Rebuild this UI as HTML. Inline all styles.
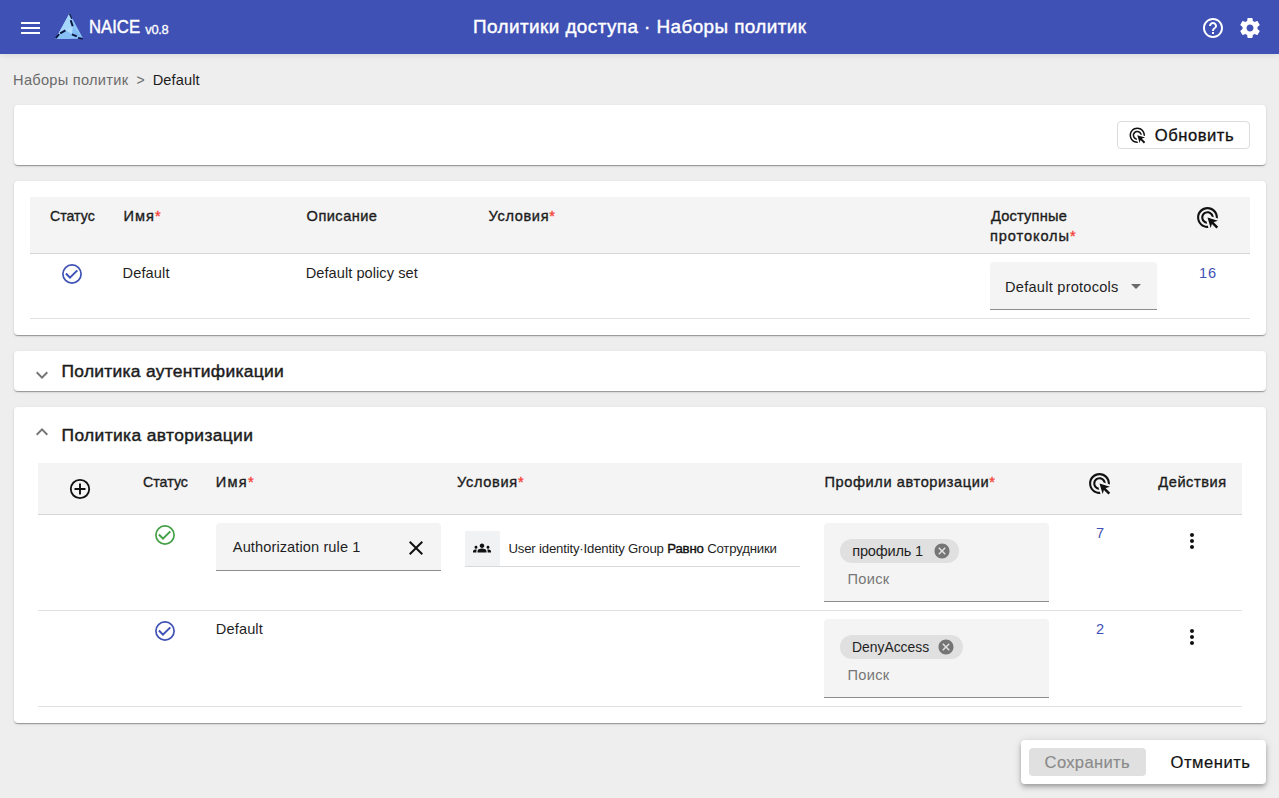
<!DOCTYPE html>
<html><head><meta charset="utf-8">
<style>
*{box-sizing:border-box;margin:0;padding:0}
html,body{width:1279px;height:798px;overflow:hidden}
body{background:#eeeeee;font-family:"Liberation Sans",sans-serif;color:#222;position:relative;font-size:14px}
.a{position:absolute;white-space:nowrap}
svg{display:block}
.hdr{left:0;top:0;width:1279px;height:54px;background:#3f51b5;box-shadow:0 1px 6px rgba(0,0,0,.1)}
.card{background:#fff;border-radius:4px;box-shadow:0 2px 1px -1px rgba(0,0,0,.2),0 1px 1px 0 rgba(0,0,0,.14),0 1px 3px 0 rgba(0,0,0,.12)}
.th{background:#f4f4f4;border-bottom:1px solid #d6d6d6}
.hl{height:1px;background:#e0e0e0}
.req{color:#f44336;-webkit-text-stroke:0.35px #f44336}
.fld{background:#f4f4f4;border-radius:4px 4px 0 0;border-bottom:1px solid #8c8c8c}
.chip{background:#e0e0e0;border-radius:12px;height:24px}
</style></head>
<body>
<!-- header -->
<div class="a hdr"></div>
<div class="a" style="left:21px;top:22px;width:19px;height:2px;background:#fff"></div><div class="a" style="left:21px;top:27px;width:19px;height:2px;background:#fff"></div><div class="a" style="left:21px;top:32px;width:19px;height:2px;background:#fff"></div>
<svg class="a" style="left:55px;top:13px" width="29" height="27" viewBox="0 0 29 27">
  <polygon points="14.5,0.3 28.2,25.8 0.5,26" fill="#8ec6f8"/>
  <polygon points="14.5,0.3 17.8,13.5 10.4,17.2 0.5,26" fill="#a6d6fc"/>
  <polygon points="17.8,13.5 28.2,25.8 16.9,21.3" fill="#7fbaf3"/>
  <polygon points="10.4,17.2 17.8,13.5 16.9,21.3" fill="#b0dcfd"/>
  <polygon points="0.5,26 10.4,17.2 16.9,21.3 14,26" fill="#86c0f5"/>
  <path d="M14.5 0.8 L16.8 5.8" stroke="#0b1640" stroke-width="1.3"/>
  <path d="M15.7 7.3 L17.7 13.2" stroke="#0b1640" stroke-width="2"/>
  <path d="M0.8 25.2 L4.2 21.2" stroke="#0b1640" stroke-width="1.8"/>
  <path d="M5.2 20.3 L10.4 17.3" stroke="#0b1640" stroke-width="2"/>
  <path d="M16.9 21.4 L21.8 23.4" stroke="#0b1640" stroke-width="2"/>
  <path d="M23 24.9 L27.9 25.7" stroke="#0b1640" stroke-width="1.6"/>
</svg>
<svg class="a" style="left:1200.7px;top:15.8px" width="24" height="24" viewBox="0 0 24 24"><path fill="#fff" d="M11 18h2v-2h-2v2zm1-16C6.48 2 2 6.48 2 12s4.48 10 10 10 10-4.48 10-10S17.52 2 12 2zm0 18c-4.41 0-8-3.590-8-8s3.59-8 8-8 8 3.59 8 8-3.59 8-8 8zm0-14c-2.21 0-4 1.79-4 4h2c0-1.1.9-2 2-2s2 .9 2 2c0 2-3 1.75-3 5h2c0-2.25 3-2.5 3-5 0-2.21-1.79-4-4-4z"/></svg>
<svg class="a" style="left:1237.7px;top:15.8px" width="24" height="24" viewBox="0 0 24 24"><path fill="#fff" d="M19.43 12.98c.04-.32.07-.64.07-.98s-.03-.66-.07-.98l2.11-1.65c.19-.15.24-.42.12-.64l-2-3.46c-.12-.22-.39-.3-.61-.22l-2.49 1c-.52-.4-1.08-.73-1.690-.98l-.38-2.65C14.46 2.18 14.25 2 14 2h-4c-.25 0-.46.18-.49.42l-.38 2.65c-.61.25-1.17.59-1.69.98l-2.49-1c-.23-.09-.49 0-.61.22l-2 3.46c-.13.22-.07.49.12.64l2.11 1.65c-.04.32-.07.65-.07.98s.03.66.07.98l-2.11 1.65c-.19.15-.24.42-.12.64l2 3.46c.12.22.39.3.61.22l2.49-1c.52.4 1.08.73 1.69.98l.38 2.65c.03.24.24.42.49.42h4c.25 0 .46-.18.49-.42l.38-2.65c.61-.25 1.17-.59 1.69-.98l2.49 1c.23.09.49 0 .61-.22l2-3.46c.12-.22.07-.49-.12-.64l-2.11-1.65zM12 15.5c-1.93 0-3.5-1.57-3.5-3.5s1.57-3.5 3.5-3.5 3.5 1.57 3.5 3.5-1.57 3.5-3.5 3.5z"/></svg>

<!-- card 1 -->
<div class="a card" style="left:14px;top:105px;width:1252px;height:60px"></div>
<div class="a" style="left:1117px;top:121px;width:133px;height:28px;border:1px solid #dcdcdc;border-radius:4px"></div>
<svg class="a" style="left:1128.2px;top:125.8px" width="18.6" height="18.6" viewBox="0 0 24 24"><path fill="#111" d="M11.71 17.99C8.53 17.84 6 15.22 6 12c0-3.31 2.69-6 6-6 3.22 0 5.84 2.53 5.99 5.71l-2.1-.63C15.48 9.31 13.89 8 12 8c-2.21 0-4 1.79-4 4 0 1.89 1.31 3.48 3.08 3.890l.63 2.1zM22 12c0 .3-.01.6-.04.9l-1.97-.59c.01-.1.01-.21.01-.31 0-4.42-3.58-8-8-8s-8 3.58-8 8 3.58 8 8 8c.1 0 .21 0 .31-.01l.59 1.97c-.3.03-.6.04-.9.04-5.52 0-10-4.48-10-10S6.48 2 12 2s10 4.48 10 10zm-3.77 4.26L22 15l-10-3 3 10 1.26-3.770 4.27 4.27 1.73-1.73-4.26-4.27z"/></svg>

<!-- card 2 -->
<div class="a card" style="left:14px;top:181px;width:1252px;height:154px"></div>
<div class="a th" style="left:30px;top:197px;width:1220px;height:57px"></div>
<div class="a hl" style="left:30px;top:318px;width:1220px"></div>
<svg class="a" style="left:60.1px;top:262px" width="24" height="24" viewBox="0 0 24 24"><circle cx="12" cy="12" r="9.1" fill="none" stroke="#3f51b5" stroke-width="1.7"/><path d="M5.9 11.5 L10 15.7 L17.3 8.4" fill="none" stroke="#3f51b5" stroke-width="2"/></svg>
<div class="a fld" style="left:990px;top:262px;width:167px;height:48px"></div>
<svg class="a" style="left:1124px;top:273.5px" width="24" height="24" viewBox="0 0 24 24"><path fill="#6b6b6b" d="M7 10l5 5 5-5z"/></svg>
<svg class="a ac" style="left:1195.1px;top:204.7px" width="25" height="25" viewBox="0 0 24 24"><path fill="#111" d="M11.71 17.99C8.53 17.84 6 15.22 6 12c0-3.31 2.69-6 6-6 3.22 0 5.84 2.53 5.99 5.71l-2.1-.63C15.48 9.31 13.89 8 12 8c-2.21 0-4 1.79-4 4 0 1.89 1.31 3.48 3.08 3.89l.63 2.1zM22 12c0 .3-.01.6-.04.9l-1.97-.59c.01-.1.01-.21.01-.31 0-4.42-3.58-8-8-8s-8 3.58-8 8 3.58 8 8 8c.1 0 .21 0 .31-.01l.59 1.97c-.3.03-.6.04-.9.04-5.52 0-10-4.48-10-10S6.48 2 12 2s10 4.48 10 10zm-3.77 4.26L22 15l-10-3 3 10 1.26-3.77 4.27 4.27 1.73-1.73-4.26-4.27z"/></svg>

<!-- card 3 -->
<div class="a card" style="left:14px;top:351px;width:1252px;height:40px"></div>
<svg class="a" style="left:30px;top:362.5px" width="24" height="24" viewBox="0 0 24 24"><path fill="#757575" d="M16.59 8.59L12 13.17 7.41 8.59 6 10l6 6 6-6z"/></svg>

<!-- card 4 -->
<div class="a card" style="left:14px;top:407px;width:1252px;height:316px"></div>
<svg class="a" style="left:30px;top:420px" width="24" height="24" viewBox="0 0 24 24"><path fill="#757575" d="M12 8l-6 6 1.41 1.41L12 10.83l4.59 4.58L18 14z"/></svg>
<div class="a th" style="left:38px;top:463px;width:1204px;height:52px"></div>
<svg class="a" style="left:68.1px;top:476.9px" width="24" height="24" viewBox="0 0 24 24"><circle cx="12" cy="12" r="9.2" fill="none" stroke="#111" stroke-width="1.8"/><path d="M6.5 12H17.5M12 6.6V17.4" stroke="#111" stroke-width="1.9"/></svg>
<svg class="a ac" style="left:1087.1px;top:470.7px" width="25" height="25" viewBox="0 0 24 24"><path fill="#111" d="M11.71 17.99C8.53 17.84 6 15.22 6 12c0-3.31 2.69-6 6-6 3.22 0 5.84 2.53 5.99 5.71l-2.1-.63C15.48 9.31 13.89 8 12 8c-2.21 0-4 1.79-4 4 0 1.89 1.31 3.48 3.08 3.89l.63 2.1zM22 12c0 .3-.01.6-.04.9l-1.97-.59c.01-.1.01-.21.01-.31 0-4.42-3.58-8-8-8s-8 3.58-8 8 3.58 8 8 8c.1 0 .21 0 .31-.01l.59 1.97c-.3.03-.6.04-.9.04-5.52 0-10-4.48-10-10S6.48 2 12 2s10 4.48 10 10zm-3.77 4.26L22 15l-10-3 3 10 1.26-3.77 4.27 4.27 1.73-1.73-4.26-4.27z"/></svg>

<!-- row 1 -->
<svg class="a" style="left:153.3px;top:523px" width="24" height="24" viewBox="0 0 24 24"><circle cx="12" cy="12" r="9.1" fill="none" stroke="#43a047" stroke-width="1.7"/><path d="M5.9 11.5 L10 15.7 L17.3 8.4" fill="none" stroke="#43a047" stroke-width="2"/></svg>
<div class="a fld" style="left:216px;top:522.8px;width:224.8px;height:48px"></div>
<svg class="a" style="left:404.2px;top:536.2px" width="24" height="24" viewBox="0 0 24 24"><path fill="#111" d="M19 6.41L17.59 5 12 10.59 6.41 5 5 6.41 10.59 12 5 17.59 6.41 19 12 13.41 17.59 19 19 17.59 13.41 12z"/></svg>
<div class="a" style="left:465px;top:531px;width:335px;height:36px;border-bottom:1px solid #d9d9d9"></div>
<div class="a" style="left:465px;top:531px;width:35px;height:35px;background:#f1f2f4"></div>
<svg class="a" style="left:473px;top:538.5px" width="18" height="18" viewBox="0 0 24 24"><path fill="#111" d="M12 12.75c1.63 0 3.07.39 4.24.9 1.08.48 1.76 1.56 1.76 2.73V18H6v-1.61c0-1.18.68-2.26 1.76-2.73 1.170-.52 2.61-.91 4.24-.91zM4 13c1.1 0 2-.9 2-2s-.9-2-2-2-2 .9-2 2 .9 2 2 2zm1.13 1.1c-.37-.06-.74-.1-1.13-.1-.99 0-1.93.21-2.78.58C.48 14.9 0 15.62 0 16.43V18h4.5v-1.61c0-.83.23-1.61.63-2.29zM20 13c1.1 0 2-.9 2-2s-.9-2-2-2-2 .9-2 2 .9 2 2 2zm4 3.43c0-.81-.48-1.53-1.22-1.85-.85-.37-1.79-.58-2.78-.58-.39 0-.76.04-1.13.1.4.68.63 1.46.63 2.29V18H24v-1.57zM12 6c1.66 0 3 1.34 3 3s-1.34 3-3 3-3-1.34-3-3 1.34-3 3-3z"/></svg>
<div class="a fld" style="left:824px;top:522.8px;width:225px;height:79px"></div>
<div class="a chip" style="left:839.7px;top:538.8px;width:119.1px"></div>
<svg class="a" style="left:933px;top:541.8px" width="18" height="18" viewBox="0 0 24 24"><path fill="#757575" d="M12 2C6.47 2 2 6.47 2 12s4.47 10 10 10 10-4.47 10-10S17.53 2 12 2zm5 13.59L15.59 17 12 13.41 8.41 17 7 15.590 10.59 12 7 8.41 8.41 7 12 10.59 15.59 7 17 8.41 13.41 12 17 15.59z"/></svg>
<svg class="a" style="left:1180px;top:528.5px" width="24" height="24" viewBox="0 0 24 24"><path fill="#111" d="M12 8c1.1 0 2-.9 2-2s-.9-2-2-2-2 .9-2 2 .9 2 2 2zm0 2c-1.1 0-2 .9-2 2s.9 2 2 2 2-.9 2-2-.9-2-2-2zm0 6c-1.1 0-2 .9-2 2s.9 2 2 2 2-.9 2-2-.9-2-2-2z"/></svg>
<div class="a hl" style="left:38px;top:610px;width:1204px"></div>

<!-- row 2 -->
<svg class="a" style="left:153.3px;top:619px" width="24" height="24" viewBox="0 0 24 24"><circle cx="12" cy="12" r="9.1" fill="none" stroke="#3f51b5" stroke-width="1.7"/><path d="M5.9 11.5 L10 15.7 L17.3 8.4" fill="none" stroke="#3f51b5" stroke-width="2"/></svg>
<div class="a fld" style="left:824px;top:619.1px;width:225px;height:79px"></div>
<div class="a chip" style="left:839.7px;top:634.9px;width:123.3px"></div>
<svg class="a" style="left:937.3px;top:637.8px" width="18" height="18" viewBox="0 0 24 24"><path fill="#757575" d="M12 2C6.47 2 2 6.47 2 12s4.47 10 10 10 10-4.47 10-10S17.53 2 12 2zm5 13.59L15.59 17 12 13.41 8.41 17 7 15.59 10.59 12 7 8.41 8.41 7 12 10.59 15.59 7 17 8.41 13.41 12 17 15.59z"/></svg>
<svg class="a" style="left:1180px;top:625px" width="24" height="24" viewBox="0 0 24 24"><path fill="#111" d="M12 8c1.1 0 2-.9 2-2s-.9-2-2-2-2 .9-2 2 .9 2 2 2zm0 2c-1.1 0-2 .9-2 2s.9 2 2 2 2-.9 2-2-.9-2-2-2zm0 6c-1.1 0-2 .9-2 2s.9 2 2 2 2-.9 2-2-.9-2-2-2z"/></svg>
<div class="a hl" style="left:38px;top:706px;width:1204px"></div>

<!-- action bar -->
<div class="a card" style="left:1021px;top:740px;width:245px;height:43.5px;box-shadow:0 2px 4px -1px rgba(0,0,0,.2),0 4px 5px 0 rgba(0,0,0,.14),0 1px 10px 0 rgba(0,0,0,.12)"></div>
<div class="a" style="left:1029px;top:748px;width:117px;height:27.5px;background:#e0e0e0;border-radius:4px"></div>

<div id="naice" class="a t" style="left:88.52px;top:14.45px;font-size:18.9px;line-height:25px;font-weight:normal;color:#fff;-webkit-text-stroke:0.45px #fff;transform:scaleX(0.8850);transform-origin:0 0">NAICE</div>
<div id="ver" class="a t" style="left:145.35px;top:20.53px;font-size:12.9px;line-height:17px;font-weight:normal;color:#fff;-webkit-text-stroke:0.3px #fff;letter-spacing:-0.330px">v0.8</div>
<div id="title" class="a t" style="left:473.10px;top:14.45px;font-size:18.9px;line-height:25px;font-weight:normal;color:#fff;-webkit-text-stroke:0.4px #fff;letter-spacing:0.422px">Политики доступа · Наборы политик</div>
<div id="bc1" class="a t" style="left:13.10px;top:70.94px;font-size:14.6px;line-height:19px;font-weight:normal;color:#6b6b6b;letter-spacing:0.277px">Наборы политик</div>
<div id="bc2" class="a t" style="left:136.42px;top:71.15px;font-size:14px;line-height:18px;font-weight:normal;color:#6b6b6b;letter-spacing:0.000px">&gt;</div>
<div id="bc3" class="a t" style="left:152.68px;top:70.94px;font-size:14.6px;line-height:19px;font-weight:normal;color:#1c1c1c;letter-spacing:0.120px">Default</div>
<div id="upd" class="a t" style="left:1154.84px;top:124.75px;font-size:16.6px;line-height:22px;font-weight:normal;color:#111;-webkit-text-stroke:0.3px #111;letter-spacing:0.514px">Обновить</div>
<div id="h_st" class="a t" style="left:50.00px;top:206.94px;font-size:14.6px;line-height:19px;font-weight:normal;color:#1c1c1c;-webkit-text-stroke:0.35px #1c1c1c;transform:scaleX(0.9698);transform-origin:0 0">Статус</div>
<div id="h_nm" class="a t" style="left:123.42px;top:206.94px;font-size:14.6px;line-height:19px;font-weight:normal;color:#1c1c1c;-webkit-text-stroke:0.35px #1c1c1c;letter-spacing:1.020px">Имя<span class="req">*</span></div>
<div id="h_ds" class="a t" style="left:306.58px;top:206.94px;font-size:14.6px;line-height:19px;font-weight:normal;color:#1c1c1c;-webkit-text-stroke:0.35px #1c1c1c;letter-spacing:0.463px">Описание</div>
<div id="h_cn" class="a t" style="left:488.50px;top:206.94px;font-size:14.6px;line-height:19px;font-weight:normal;color:#1c1c1c;-webkit-text-stroke:0.35px #1c1c1c;letter-spacing:0.643px">Условия<span class="req">*</span></div>
<div id="h_pr1" class="a t" style="left:990.90px;top:206.94px;font-size:14.6px;line-height:19px;font-weight:normal;color:#1c1c1c;-webkit-text-stroke:0.35px #1c1c1c;letter-spacing:0.225px">Доступные</div>
<div id="h_pr2" class="a t" style="left:990.00px;top:226.94px;font-size:14.6px;line-height:19px;font-weight:normal;color:#1c1c1c;-webkit-text-stroke:0.35px #1c1c1c;letter-spacing:0.900px">протоколы<span class="req">*</span></div>
<div id="r_nm" class="a t" style="left:122.52px;top:263.94px;font-size:14.6px;line-height:19px;font-weight:normal;color:#1f1f1f;letter-spacing:0.120px">Default</div>
<div id="r_ds" class="a t" style="left:305.68px;top:263.94px;font-size:14.6px;line-height:19px;font-weight:normal;color:#1f1f1f;letter-spacing:0.053px">Default policy set</div>
<div id="r_sel" class="a t" style="left:1005.10px;top:277.94px;font-size:14.6px;line-height:19px;font-weight:normal;color:#1f1f1f;letter-spacing:0.236px">Default protocols</div>
<div id="r_16" class="a t" style="left:1199.10px;top:263.94px;font-size:14.6px;line-height:19px;font-weight:normal;color:#3f51b5;letter-spacing:0.720px">16</div>
<div id="t3" class="a t" style="left:61.52px;top:359.97px;font-size:17.4px;line-height:23px;font-weight:normal;color:#1c1c1c;-webkit-text-stroke:0.45px #1c1c1c;letter-spacing:0.286px">Политика аутентификации</div>
<div id="t4" class="a t" style="left:61.52px;top:423.97px;font-size:17.4px;line-height:23px;font-weight:normal;color:#1c1c1c;-webkit-text-stroke:0.45px #1c1c1c;letter-spacing:0.379px">Политика авторизации</div>
<div id="a_st" class="a t" style="left:143.08px;top:472.94px;font-size:14.6px;line-height:19px;font-weight:normal;color:#1c1c1c;-webkit-text-stroke:0.35px #1c1c1c;transform:scaleX(0.9745);transform-origin:0 0">Статус</div>
<div id="a_nm" class="a t" style="left:215.68px;top:472.94px;font-size:14.6px;line-height:19px;font-weight:normal;color:#1c1c1c;-webkit-text-stroke:0.35px #1c1c1c;letter-spacing:1.320px">Имя<span class="req">*</span></div>
<div id="a_cn" class="a t" style="left:457.00px;top:472.94px;font-size:14.6px;line-height:19px;font-weight:normal;color:#1c1c1c;-webkit-text-stroke:0.35px #1c1c1c;letter-spacing:0.669px">Условия<span class="req">*</span></div>
<div id="a_pf" class="a t" style="left:824.42px;top:472.94px;font-size:14.6px;line-height:19px;font-weight:normal;color:#1c1c1c;-webkit-text-stroke:0.35px #1c1c1c;letter-spacing:0.597px">Профили авторизации<span class="req">*</span></div>
<div id="a_ac" class="a t" style="left:1158.32px;top:472.94px;font-size:14.6px;line-height:19px;font-weight:normal;color:#1c1c1c;-webkit-text-stroke:0.35px #1c1c1c;letter-spacing:0.540px">Действия</div>
<div id="rule1" class="a t" style="left:232.82px;top:537.94px;font-size:14.6px;line-height:19px;font-weight:normal;color:#1f1f1f;letter-spacing:0.095px">Authorization rule 1</div>
<div id="cond" class="a t" style="left:508.42px;top:540.42px;font-size:13.2px;line-height:17px;font-weight:normal;color:#1f1f1f;letter-spacing:-0.184px">User identity·Identity Group <span style="color:#111;-webkit-text-stroke:0.4px #111">Равно</span> Сотрудники</div>
<div id="pf1" class="a t" style="left:852.26px;top:541.94px;font-size:14.6px;line-height:19px;font-weight:normal;color:#1f1f1f;letter-spacing:-0.202px">профиль 1</div>
<div id="srch1" class="a t" style="left:847.60px;top:569.94px;font-size:14.6px;line-height:19px;font-weight:normal;color:#777;letter-spacing:0.270px">Поиск</div>
<div id="n7" class="a t" style="left:1095.92px;top:523.94px;font-size:14.6px;line-height:19px;font-weight:normal;color:#3f51b5;letter-spacing:0.000px">7</div>
<div id="rdef" class="a t" style="left:215.84px;top:619.94px;font-size:14.6px;line-height:19px;font-weight:normal;color:#1f1f1f;letter-spacing:0.120px">Default</div>
<div id="pf2" class="a t" style="left:852.26px;top:637.94px;font-size:14.6px;line-height:19px;font-weight:normal;color:#1f1f1f;transform:scaleX(0.9508);transform-origin:0 0">DenyAccess</div>
<div id="srch2" class="a t" style="left:847.60px;top:665.94px;font-size:14.6px;line-height:19px;font-weight:normal;color:#777;letter-spacing:0.270px">Поиск</div>
<div id="n2" class="a t" style="left:1095.92px;top:619.94px;font-size:14.6px;line-height:19px;font-weight:normal;color:#3f51b5;letter-spacing:0.000px">2</div>
<div id="save" class="a t" style="left:1044.60px;top:751.75px;font-size:16.6px;line-height:22px;font-weight:normal;color:#8a8a8a;-webkit-text-stroke:0.15px #8a8a8a;letter-spacing:0.315px">Сохранить</div>
<div id="cancel" class="a t" style="left:1170.50px;top:751.75px;font-size:16.6px;line-height:22px;font-weight:normal;color:#111;-webkit-text-stroke:0.2px #111;letter-spacing:0.514px">Отменить</div>
</body></html>
